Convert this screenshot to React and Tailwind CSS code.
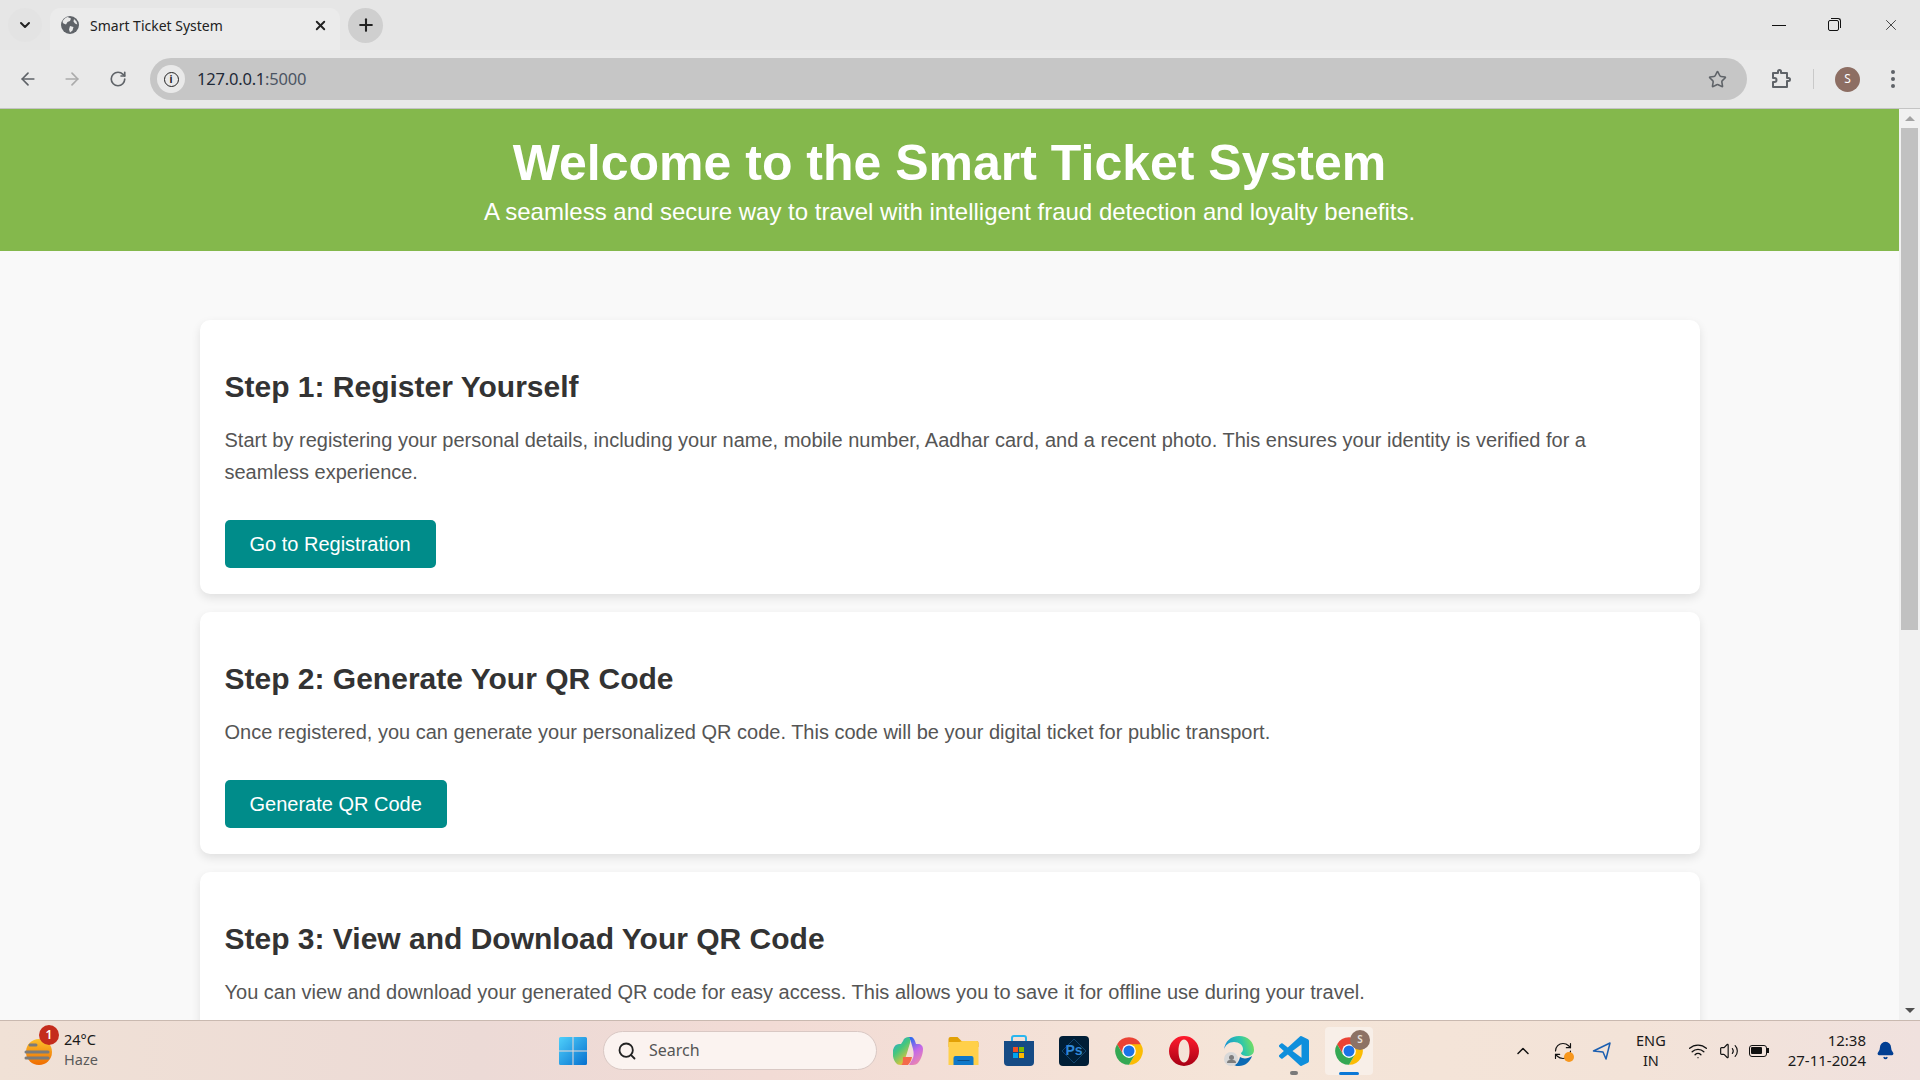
import {
  ArrowLeft,
  ArrowRight,
  RotateCw,
  RefreshCw,
  Star,
  ChevronDown,
  ChevronUp,
  X,
  Plus,
  Search,
  Wifi,
  Volume2,
  Bell,
} from "lucide-react";

const steps = [
  {
    title: "Step 1: Register Yourself",
    text: "Start by registering your personal details, including your name, mobile number, Aadhar card, and a recent photo. This ensures your identity is verified for a seamless experience.",
    button: "Go to Registration",
  },
  {
    title: "Step 2: Generate Your QR Code",
    text: "Once registered, you can generate your personalized QR code. This code will be your digital ticket for public transport.",
    button: "Generate QR Code",
  },
  {
    title: "Step 3: View and Download Your QR Code",
    text: "You can view and download your generated QR code for easy access. This allows you to save it for offline use during your travel.",
  },
];

function ChromeIcon({ className }) {
  return (
    <svg viewBox="0 0 24 24" className={className}>
      <path fill="#ea4335" d="M12 12 21.53 6.5A11 11 0 0 0 2.47 6.5L7.24 14.75z" />
      <path fill="#fbbc04" d="M21.53 6.5H12l4.76 8.25L12 23A11 11 0 0 0 21.53 6.5z" />
      <path fill="#34a853" d="M2.47 6.5 7.24 14.75h9.52L12 23A11 11 0 0 1 2.47 6.5z" />
      <circle cx="12" cy="12" r="5.5" fill="#fff" />
      <circle cx="12" cy="12" r="4.4" fill="#1a73e8" />
    </svg>
  );
}

function GlobeIcon() {
  return (
    <svg viewBox="0 0 18 18" className="w-[18px] h-[18px]">
      <circle cx="9" cy="9" r="9" fill="#5f6368" />
      <path fill="#e9e9e9" d="M6.5 1 10 2.5 9 5 6.5 6 5 8.5 2.5 7.5 1.5 6C2.3 3.6 4 1.8 6.5 1zM9 10l3.5 1-1 3.5-2.5 2-1-3zM13 3l2.5 2.5.8 3-2.3-1-1.5-2z" />
    </svg>
  );
}

function PuzzleIcon() {
  return (
    <svg viewBox="0 0 22 22" className="w-[22px] h-[22px]" fill="none" stroke="#5f6368" strokeWidth="2" strokeLinejoin="round">
      <path d="M3 5h5V3.5a1.5 1.5 0 0 1 3 0V5h6v5h1.5a1.5 1.5 0 0 1 0 3H17v6H3v-5h1.5a2 2 0 0 0 0-4H3z" />
    </svg>
  );
}

function WeatherIcon() {
  return (
    <div className="relative w-[34px] h-[36px]">
      <svg viewBox="0 0 34 36" className="w-[34px] h-[36px]">
        <defs>
          <linearGradient id="sun" x1="0" y1="0" x2="0" y2="1">
            <stop offset="0" stopColor="#fbc02d" />
            <stop offset="1" stopColor="#ef6c00" />
          </linearGradient>
        </defs>
        <circle cx="15" cy="19" r="13" fill="url(#sun)" />
        <g stroke="#7b7b7b" strokeWidth="3" strokeLinecap="round">
          <path d="M6 12h6M2 19h22M2 25h22" />
        </g>
      </svg>
      <div className="absolute -top-[8px] left-[15px] w-[20px] h-[20px] rounded-full bg-[#c42b1c] text-white text-[12px] font-semibold flex items-center justify-center">
        1
      </div>
    </div>
  );
}

function WindowsLogo() {
  return (
    <svg viewBox="0 0 30 30" className="w-[30px] h-[30px]">
      <defs>
        <linearGradient id="win" x1="0" y1="0" x2="1" y2="1">
          <stop offset="0" stopColor="#4fd0fb" />
          <stop offset="1" stopColor="#0670cf" />
        </linearGradient>
      </defs>
      <path fill="url(#win)" d="M1 2.500A1.500 1.500 0 0 1 2.500 1H14.500V14.500H1zM15.500 1H27.500A1.500 1.500 0 0 1 29 2.500V14.500H15.500zM1 15.500H14.500V29H2.500A1.500 1.500 0 0 1 1 27.500zM15.500 15.500H29V27.500A1.500 1.500 0 0 1 27.500 29H15.500z" />
    </svg>
  );
}

function CopilotIcon() {
  return (
    <svg viewBox="0 0 30 30" className="w-[30px] h-[30px]">
      <defs>
        <linearGradient id="copA" x1="0" y1="0" x2="0.600" y2="1">
          <stop offset="0" stopColor="#1f9ff0" />
          <stop offset="0.500" stopColor="#45c77d" />
          <stop offset="1" stopColor="#f4c430" />
        </linearGradient>
        <linearGradient id="copB" x1="0.300" y1="0" x2="0.700" y2="1">
          <stop offset="0" stopColor="#2f6bf0" />
          <stop offset="0.500" stopColor="#c468e8" />
          <stop offset="1" stopColor="#f08aa8" />
        </linearGradient>
      </defs>
      <path fill="url(#copB)" d="M15 1h3c2 0 3 2 4 4l1 3h2c3 0 5 2 5 5 0 6-3 12-5 14-1 1-3 2-5 2h-4l3-5c2-3 2-7 1-11l-2-7c-.5-2-1.500-4-3-5z" />
      <path fill="url(#copA)" d="M16 1c-3 0-5 1-6 4L8 8H6C3 8 1 10 0 14c-1 6 1 11 3 13 1 1 2 2 5 2 2 0 3-3 4-6l2-6 3-10c.5-2 0-5-1-6z" />
      <path fill="#f4694a" d="M10 21h9c-.5 3-2 6-4 8H8c2-1 2-4 2-8z" />
    </svg>
  );
}

function FolderIcon() {
  return (
    <svg viewBox="0 0 30 28" className="w-[31px] h-[28px]">
      <path fill="#e2a106" d="M0 2a2 2 0 0 1 2-2h7l4 4h15a2 2 0 0 1 2 2v4H0z" />
      <path fill="#ffd04a" d="M0 5h11l3-1h14a2 2 0 0 1 2 2v22H0z" />
      <path fill="#0f78c9" d="M5 28v-7a2 2 0 0 1 2-2h16a2 2 0 0 1 2 2v7z" />
      <path fill="#0a4f8a" d="M9 23h12v1H9z" />
    </svg>
  );
}

function StoreIcon() {
  return (
    <svg viewBox="0 0 30 31" className="w-[30px] h-[31px]">
      <path fill="none" stroke="#2ab6ee" strokeWidth="2" d="M8 8V3a2 2 0 0 1 2-2h10a2 2 0 0 1 2 2v5" />
      <path fill="#164b85" d="M0 6h30v21a4 4 0 0 1-4 4H4a4 4 0 0 1-4-4z" />
      <rect x="9" y="12" width="5" height="5" fill="#f25022" />
      <rect x="15" y="12" width="5" height="5" fill="#7fba00" />
      <rect x="9" y="18" width="5" height="5" fill="#00a4ef" />
      <rect x="15" y="18" width="5" height="5" fill="#ffb900" />
    </svg>
  );
}

function PhotoshopIcon() {
  return (
    <div className="relative w-[30px] h-[30px] rounded-[4px] bg-[#001e36] text-[#2f86d6] text-[14px] font-bold flex items-center justify-center font-['Liberation_Sans',sans-serif]">
      <svg viewBox="0 0 30 30" className="absolute inset-0 w-[30px] h-[30px]" fill="none" stroke="#12456e" strokeWidth="1">
        <path d="M15 3 27 15 15 27 3 15z" />
      </svg>
      <span className="relative">Ps</span>
    </div>
  );
}

function OperaIcon() {
  return (
    <svg viewBox="0 0 30 30" className="w-[30px] h-[30px]">
      <defs>
        <linearGradient id="op" x1="0" y1="0" x2="0" y2="1">
          <stop offset="0" stopColor="#ff1b2d" />
          <stop offset="1" stopColor="#a70014" />
        </linearGradient>
      </defs>
      <path
        fill="url(#op)"
        fillRule="evenodd"
        d="M15 0a15 15 0 1 0 0 30a15 15 0 0 0 0-30zM15 3.500c3.500 0 5.500 5 5.500 11.500s-2 11.500-5.500 11.500-5.500-5-5.500-11.500 2-11.500 5.500-11.500z"
      />
    </svg>
  );
}

function EdgeIcon() {
  return (
    <div className="relative w-[30px] h-[30px]">
      <svg viewBox="0 0 30 30" className="w-[30px] h-[30px]">
        <defs>
          <linearGradient id="edgeTop" x1="0" y1="0.500" x2="1" y2="0.300">
            <stop offset="0" stopColor="#1490d8" />
            <stop offset="0.600" stopColor="#30c8a8" />
            <stop offset="1" stopColor="#7be05a" />
          </linearGradient>
        </defs>
        <path fill="url(#edgeTop)" d="M0 14C1 5 7 0 15 0c9 0 15 6 15 14 0 4-3 6-7 6-3 0-6-1-6-3 1-1 2-2 2-4 0-4-4-7-9-7C5 6 1 9 0 14z" />
        <path fill="#0c6bb4" d="M16 21c3 2 8 2 12-1-2 6-7 10-13 10-2 0-3 0-5-1 2 0 5-3 6-8z" />
      </svg>
      <div className="absolute left-0 bottom-0 w-[14px] h-[14px] rounded-full bg-[#d8d8d8] flex flex-col items-center justify-center">
        <div className="w-[5px] h-[5px] rounded-full bg-[#7d7d7d]" />
        <div className="w-[9px] h-[3px] rounded-t-full bg-[#7d7d7d]" />
      </div>
    </div>
  );
}

function VscodeIcon() {
  return (
    <svg viewBox="0 0 24 24" className="w-[30px] h-[30px]">
      <path
        fill="#0f8fdc"
        d="M23.15 2.587 18.21.21a1.494 1.494 0 0 0-1.705.29l-9.46 8.63-4.12-3.128a.999.999 0 0 0-1.276.057L.327 7.261A1 1 0 0 0 .326 8.74L3.899 12 .326 15.26a1 1 0 0 0 .001 1.479L1.65 17.94a.999.999 0 0 0 1.276.057l4.12-3.128 9.46 8.63a1.492 1.492 0 0 0 1.704.29l4.942-2.377A1.5 1.5 0 0 0 24 20.06V3.939a1.5 1.5 0 0 0-.85-1.352zm-5.146 14.861L10.826 12l7.178-5.448v10.896z"
      />
    </svg>
  );
}

function Chrome() {
  return (
    <div className="shrink-0 bg-[#e6e6e6] border-b border-[#c4c4c4] font-['Noto_Sans',sans-serif]">
      {/* tab strip */}
      <div className="h-[50px] flex items-end">
        <div className="w-[50px] h-[50px] flex items-center justify-center">
          <div className="w-[34px] h-[34px] rounded-full bg-[#e3e3e3] flex items-center justify-center">
            <ChevronDown size={16} strokeWidth={3} color="#222" />
          </div>
        </div>
        <div className="w-[290px] h-[42px] bg-[#ebebeb] rounded-t-[10px] flex items-center pl-[11px] pr-[12px] pb-[8px]">
          <GlobeIcon />
          <span className="ml-[11px] text-[14px] text-[#222]">Smart Ticket System</span>
          <X size={15} strokeWidth={3} color="#222" className="ml-auto" />
        </div>
        <div className="self-center ml-[8px] w-[35px] h-[35px] rounded-full bg-[#cfcfcf] flex items-center justify-center">
          <Plus size={20} strokeWidth={2.5} color="#222" />
        </div>
        <div className="ml-auto self-center flex items-center pr-[20px]">
          <div className="w-[14px] h-[1px] bg-[#111]" />
          <div className="ml-[42px] w-[11px] h-[11px] mt-[1px] border border-[#111] rounded-[2px] relative">
            <div className="absolute -top-[3px] -right-[3px] w-[10px] h-[10px] border-t border-r border-[#111] rounded-tr-[3px]" />
          </div>
          <X size={18} strokeWidth={1} color="#111" className="ml-[43px]" />
        </div>
      </div>
      {/* toolbar */}
      <div className="h-[58px] bg-[#e9e9e9] flex items-center">
        <ArrowLeft size={20} color="#5f6368" strokeWidth={2} className="ml-[18px]" />
        <ArrowRight size={20} color="#ababab" strokeWidth={2} className="ml-[24px]" />
        <RotateCw size={18} color="#5f6368" strokeWidth={2.2} className="ml-[27px]" />
        <div className="ml-[23px] w-[1597px] h-[42px] rounded-full bg-[#c6c6c6] flex items-center pl-[7px] pr-[20px]">
          <div className="w-[28px] h-[28px] rounded-full bg-[#e9e9e9] flex items-center justify-center">
            <div className="w-[15px] h-[15px] rounded-full border-[1.5px] border-[#222] flex items-center justify-center text-[10px] font-bold leading-none text-[#222]">
              i
            </div>
          </div>
          <span className="ml-[12px] text-[16.5px] tracking-[-0.2px] text-[#1f2a38]">
            127.0.0.1<span className="text-[#4c5563]">:5000</span>
          </span>
          <Star size={19} color="#5f6368" strokeWidth={2} className="ml-auto" />
        </div>
        <div className="ml-[23px]">
          <PuzzleIcon />
        </div>
        <div className="ml-[21px] w-[1px] h-[20px] bg-[#c9c9c9]" />
        <div className="ml-[21px] w-[25px] h-[25px] rounded-full bg-[#8d6e63] text-white text-[12px] flex items-center justify-center">
          S
        </div>
        <div className="ml-[31px] flex flex-col gap-[3px]">
          <div className="w-[4px] h-[4px] rounded-full bg-[#5f6368]" />
          <div className="w-[4px] h-[4px] rounded-full bg-[#5f6368]" />
          <div className="w-[4px] h-[4px] rounded-full bg-[#5f6368]" />
        </div>
      </div>
    </div>
  );
}

function Scrollbar() {
  return (
    <div className="w-[21px] shrink-0 bg-[#f1f1f1] flex flex-col items-center">
      <div className="h-[19px] w-full flex items-center justify-center">
        <div className="w-0 h-0 border-x-[5px] border-x-transparent border-b-[5px] border-b-[#a3a3a3]" />
      </div>
      <div className="w-[17px] h-[502px] bg-[#c1c1c1]" />
      <div className="mt-auto h-[19px] w-full flex items-center justify-center">
        <div className="w-0 h-0 border-x-[5px] border-x-transparent border-t-[5px] border-t-[#505050]" />
      </div>
    </div>
  );
}

function Taskbar() {
  return (
    <div className="h-[60px] shrink-0 border-t border-[#c9b9b0] bg-[linear-gradient(90deg,#f0e1d6_0%,#ecdad6_25%,#f2dbd5_40%,#f5e5d8_65%,#f3e3d8_85%,#f0e1de_100%)] flex items-center font-['Noto_Sans',sans-serif] text-[#1a1a1a]">
      <div className="w-[558px] shrink-0 flex items-center pl-[24px]">
        <WeatherIcon />
        <div className="ml-[6px] flex flex-col leading-[20px] text-[14.5px] -mt-[4px]">
          <span>24°C</span>
          <span className="text-[#5a5a5a]">Haze</span>
        </div>
      </div>
      <WindowsLogo />
      <div className="ml-[15px] w-[274px] h-[39px] rounded-full bg-[#fbf3f0] border border-[#d9c8c4] flex items-center pl-[13px]">
        <Search size={20} strokeWidth={2.2} color="#222" />
        <span className="ml-[12px] text-[16px] text-[#555] -mt-[1px]">Search</span>
      </div>
      <div className="ml-[16px] flex items-center gap-[25px]">
        <CopilotIcon />
        <FolderIcon />
        <StoreIcon />
        <PhotoshopIcon />
        <ChromeIcon className="w-[30px] h-[30px]" />
        <OperaIcon />
        <EdgeIcon />
        <div className="relative">
          <VscodeIcon />
          <div className="absolute -bottom-[9px] left-[11px] w-[8px] h-[4px] rounded-full bg-[#7a7a7a]" />
        </div>
      </div>
      <div className="ml-[16px] relative w-[48px] h-[48px] rounded-[4px] bg-[#f8efe8] flex items-center justify-center">
        <ChromeIcon className="w-[30px] h-[30px]" />
        <div className="absolute top-[3px] right-[3px] w-[20px] h-[20px] rounded-full bg-[#8d7265] text-[#e8e0dc] text-[10px] font-semibold flex items-center justify-center">
          S
        </div>
        <div className="absolute bottom-[0px] left-[14px] w-[20px] h-[3px] rounded-full bg-[#0b78d6]" />
      </div>
      <div className="ml-auto flex items-center pr-[25px]">
        <ChevronUp size={20} strokeWidth={1.8} color="#111" />
        <div className="ml-[20px] relative">
          <RefreshCw size={20} strokeWidth={1.4} color="#111" />
          <div className="absolute right-[-1px] bottom-[-1px] w-[10px] h-[10px] rounded-full bg-[#f7971d]" />
        </div>
        <svg viewBox="0 0 20 20" className="ml-[19px] w-[20px] h-[20px]" fill="none" stroke="#1c5fb0" strokeWidth="1.5" strokeLinejoin="round">
          <path d="M1.500 10 18 2l-4 16-3-7z" />
        </svg>
        <div className="ml-[24px] -mt-[1px] flex flex-col items-center text-[14.5px] leading-[20px]">
          <span>ENG</span>
          <span>IN</span>
        </div>
        <Wifi size={20} strokeWidth={1.6} color="#111" className="ml-[22px]" />
        <Volume2 size={20} strokeWidth={1.4} color="#111" className="ml-[11px]" />
        <div className="ml-[10px] flex items-center">
          <div className="w-[18px] h-[12px] rounded-[3px] border border-[#111] p-[1.5px]">
            <div className="w-[11px] h-full bg-[#111] rounded-[1px]" />
          </div>
          <div className="w-[2px] h-[5px] bg-[#111]" />
        </div>
        <div className="ml-[19px] -mt-[2px] flex flex-col items-end text-[15px] leading-[20px]">
          <span>12:38</span>
          <span>27-11-2024</span>
        </div>
        <Bell size={19} fill="#003e92" color="#003e92" className="ml-[10px]" />
      </div>
    </div>
  );
}

export default function App() {
  return (
    <div className="h-screen flex flex-col overflow-hidden">
      <Chrome />
      <div className="flex-1 min-h-0 flex">
        <div className="flex-1 min-w-0 overflow-hidden bg-[#f9f9f9] font-['Liberation_Sans',sans-serif]">
          <header className="h-[142px] bg-[#84b84c] text-white text-center pt-[27px]">
            <h1 className="text-[50px] leading-[55px] font-bold">Welcome to the Smart Ticket System</h1>
            <p className="mt-[7px] text-[24px] leading-[28px]">
              A seamless and secure way to travel with intelligent fraud detection and loyalty benefits.
            </p>
          </header>
          <main className="w-[1500px] mx-auto mt-[69px] flex flex-col gap-[18px]">
            {steps.map((s) => (
              <section
                key={s.title}
                className="bg-white rounded-[10px] shadow-[0_4px_10px_rgba(0,0,0,0.1)] px-[25px] pt-[25px] pb-[26px]"
              >
                <h2 className="mt-[23px] text-[30px] leading-[37px] font-bold text-[#333]">{s.title}</h2>
                <p className="mt-[19px] text-[20px] leading-[32px] text-[#555]">{s.text}</p>
                {s.button && (
                  <button className="mt-[32px] block px-[25px] h-[48px] rounded-[5px] bg-[#008c8a] text-white text-[20px]">
                    {s.button}
                  </button>
                )}
              </section>
            ))}
          </main>
        </div>
        <Scrollbar />
      </div>
      <Taskbar />
    </div>
  );
}
